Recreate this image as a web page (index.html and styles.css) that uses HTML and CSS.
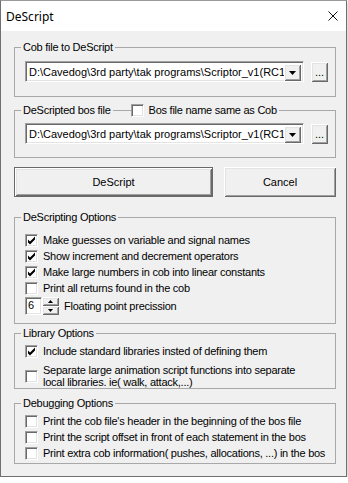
FILE: index.html
```html
<!DOCTYPE html>
<html>

<head>
    <meta name="viewport" content="width=device-width, initial-scale=1.0">
    <title>DeScript</title>
    <link rel="stylesheet" href="styles.css">
</head>

<body>
    <div class="window">
        <header class="titlebar">
            <span class="title">DeScript</span>
            <svg class="close" width="10" height="10" viewBox="0 0 10 10">
                <path d="M0.5 0.5L9.5 9.5M9.5 0.5L0.5 9.5" stroke="#111" stroke-width="1" fill="none"/>
            </svg>
        </header>

        <div class="client">
            <fieldset class="group">
                <legend>Cob file to DeScript</legend>
                <div class="inner pad-cob">
                    <div class="file-row">
                        <div class="combo">
                            <span class="combo-text">D:\Cavedog\3rd party\tak programs\Scriptor_v1(RC1</span>
                            <span class="combo-btn raised">
                                <svg width="7" height="4" viewBox="0 0 7 4"><path d="M0 0H7L3.5 4Z" fill="#000"/></svg>
                            </span>
                        </div>
                        <button class="browse raised">...</button>
                    </div>
                </div>
            </fieldset>

            <fieldset class="group g-bos">
                <legend class="legend-check">
                    <span>DeScripted bos file</span>
                    <span class="legend-line"></span>
                    <span class="cb"></span>
                    <span>Bos file name same as Cob</span>
                </legend>
                <div class="inner pad-bos">
                    <div class="file-row">
                        <div class="combo">
                            <span class="combo-text">D:\Cavedog\3rd party\tak programs\Scriptor_v1(RC1</span>
                            <span class="combo-btn raised">
                                <svg width="7" height="4" viewBox="0 0 7 4"><path d="M0 0H7L3.5 4Z" fill="#000"/></svg>
                            </span>
                        </div>
                        <button class="browse raised">...</button>
                    </div>
                </div>
            </fieldset>

            <div class="actions">
                <button class="btn btn-default raised">DeScript</button>
                <button class="btn btn-cancel raised">Cancel</button>
            </div>

            <fieldset class="group g-opts">
                <legend>DeScripting Options</legend>
                <div class="inner pad-opts">
                    <div class="row"><span class="cb checked"><svg width="9" height="9" viewBox="0 0 9 9"><path d="M1 3.5L3 5.5L8 0.5V3.5L3 8.5L1 6.5Z" fill="#000"/></svg></span>Make guesses on variable and signal names</div>
                    <div class="row"><span class="cb checked"><svg width="9" height="9" viewBox="0 0 9 9"><path d="M1 3.5L3 5.5L8 0.5V3.5L3 8.5L1 6.5Z" fill="#000"/></svg></span>Show increment and decrement operators</div>
                    <div class="row"><span class="cb checked"><svg width="9" height="9" viewBox="0 0 9 9"><path d="M1 3.5L3 5.5L8 0.5V3.5L3 8.5L1 6.5Z" fill="#000"/></svg></span>Make large numbers in cob into linear constants</div>
                    <div class="row"><span class="cb"></span>Print all returns found in the cob</div>
                    <div class="row spin-row">
                        <span class="spin-edit">6</span>
                        <span class="spin-btns">
                            <span class="spin-b raised"><svg width="5" height="3" viewBox="0 0 5 3"><path d="M0 3H5L2.5 0Z" fill="#000"/></svg></span>
                            <span class="spin-b raised"><svg width="5" height="3" viewBox="0 0 5 3"><path d="M0 0H5L2.5 3Z" fill="#000"/></svg></span>
                        </span>
                        <span class="spin-label">Floating point precission</span>
                    </div>
                </div>
            </fieldset>

            <fieldset class="group g-lib">
                <legend>Library Options</legend>
                <div class="inner pad-lib">
                    <div class="row"><span class="cb checked"><svg width="9" height="9" viewBox="0 0 9 9"><path d="M1 3.5L3 5.5L8 0.5V3.5L3 8.5L1 6.5Z" fill="#000"/></svg></span>Include standard libraries insted of defining them</div>
                    <div class="row tall"><span class="cb"></span><span class="two-line">Separate large animation script functions into separate<br>local libraries. ie( walk, attack,...)</span></div>
                </div>
            </fieldset>

            <fieldset class="group g-dbg">
                <legend>Debugging Options</legend>
                <div class="inner pad-dbg">
                    <div class="row"><span class="cb"></span>Print the cob file's header in the beginning of the bos file</div>
                    <div class="row"><span class="cb"></span>Print the script offset in front of each statement in the bos</div>
                    <div class="row"><span class="cb"></span>Print extra cob information( pushes, allocations, ...) in the bos</div>
                </div>
            </fieldset>
        </div>
    </div>
</body>

</html>
```

FILE: styles.css
```css
body {
    margin: 0;
    background: #ffffff;
    font-family: "Liberation Sans", Arial, sans-serif;
    font-size: 11px;
    letter-spacing: -0.25px;
    color: #000000;
}

.window {
    width: 347px;
    height: 477px;
    box-sizing: border-box;
    border: 1px solid #707070;
    border-top-color: #9a9a9a;
    background: #f0f0f0;
    box-shadow: 0 2px 6px rgba(0, 0, 0, 0.3);
}

.titlebar {
    height: 30px;
    background: #ffffff;
    display: flex;
    align-items: center;
    justify-content: space-between;
    padding: 0 8px 0 5px;
}

.title {
    font-family: "Noto Sans", sans-serif;
    font-size: 12px;
    letter-spacing: 0;
    margin-top: 1px;
}

.close {
    display: block;
}

.client {
    padding: 9px 0 0 13px;
}

/* group boxes */
.group {
    margin: 0;
    padding: 0;
    width: 322px;
    min-width: 0;
    box-sizing: border-box;
    border: 1px solid #a8a8a8;
}

.group legend {
    margin-left: 6px;
    padding: 0 2px;
    height: 15px;
    line-height: 15px;
}

.legend-check {
    display: flex;
    align-items: center;
}

.legend-line {
    width: 18px;
    height: 1px;
    margin-left: 2px;
    background: #a8a8a8;
}

.legend-check .cb {
    margin-right: 5px;
}

.g-bos {
    margin-top: 6px;
}

.g-opts {
    margin-top: 13px;
}

.g-lib {
    margin-top: 2px;
}

.g-dbg {
    margin-top: 7px;
}

.inner {
    padding-left: 10px;
}

.pad-cob {
    padding-top: 6px;
    padding-bottom: 14px;
}

.pad-bos {
    padding-top: 5px;
    padding-bottom: 13px;
}

.pad-opts {
    padding-top: 7px;
    padding-bottom: 8px;
}

.pad-lib {
    padding-top: 2px;
    padding-bottom: 0;
}

.pad-dbg {
    padding-top: 2px;
    padding-bottom: 2px;
}

/* 3d edges */
.raised {
    background: #f0f0f0;
    box-shadow: inset 1px 1px #ffffff, inset -1px -1px #696969, inset 2px 2px #e3e3e3, inset -2px -2px #a0a0a0;
}

.combo,
.cb,
.spin-edit {
    background: #ffffff;
    border: 1px solid;
    border-color: #a0a0a0 #ffffff #ffffff #a0a0a0;
    box-shadow: inset 1px 1px #696969, inset -1px -1px #e3e3e3;
    box-sizing: border-box;
}

/* combo + browse */
.file-row {
    display: flex;
    align-items: flex-start;
}

.combo {
    width: 279px;
    height: 21px;
    display: flex;
    padding: 2px;
    overflow: hidden;
}

.combo-text {
    flex: 1;
    overflow: hidden;
    white-space: nowrap;
    line-height: 17px;
    padding-left: 1px;
    letter-spacing: 0;
}

.combo-btn {
    flex: none;
    width: 17px;
    height: 17px;
    display: flex;
    align-items: center;
    justify-content: center;
}

.combo-btn svg {
    margin-top: 1px;
}

.browse {
    width: 17px;
    height: 20px;
    margin: 1px 0 0 7px;
    padding: 0;
    border: none;
    font: inherit;
    line-height: 20px;
    color: #000;
    text-align: center;
}

/* buttons */
.actions {
    display: flex;
    gap: 11px;
    margin-top: 9px;
}

.btn {
    height: 30px;
    padding: 0;
    border: none;
    font: inherit;
    color: #000;
}

.btn-default {
    width: 199px;
    border: 1px solid #696969;
}

.btn-cancel {
    width: 112px;
}

/* checkbox rows */
.row {
    display: flex;
    align-items: center;
    height: 16px;
    line-height: 16px;
    white-space: nowrap;
}

.cb {
    flex: none;
    width: 13px;
    height: 13px;
    margin-right: 5px;
    padding: 1px;
}

.cb svg {
    display: block;
}

.row.tall {
    height: 24px;
    margin-top: 5px;
}

.two-line {
    line-height: 12px;
}

/* spinner */
.spin-row {
    height: 18px;
    margin-top: 1px;
}

.spin-edit {
    width: 17px;
    height: 18px;
    line-height: 15px;
    padding-left: 2px;
}

.spin-btns {
    display: flex;
    flex-direction: column;
    width: 17px;
    height: 18px;
}

.spin-b {
    height: 9px;
    display: flex;
    align-items: center;
    justify-content: center;
}

.spin-label {
    margin-left: 5px;
}
```
